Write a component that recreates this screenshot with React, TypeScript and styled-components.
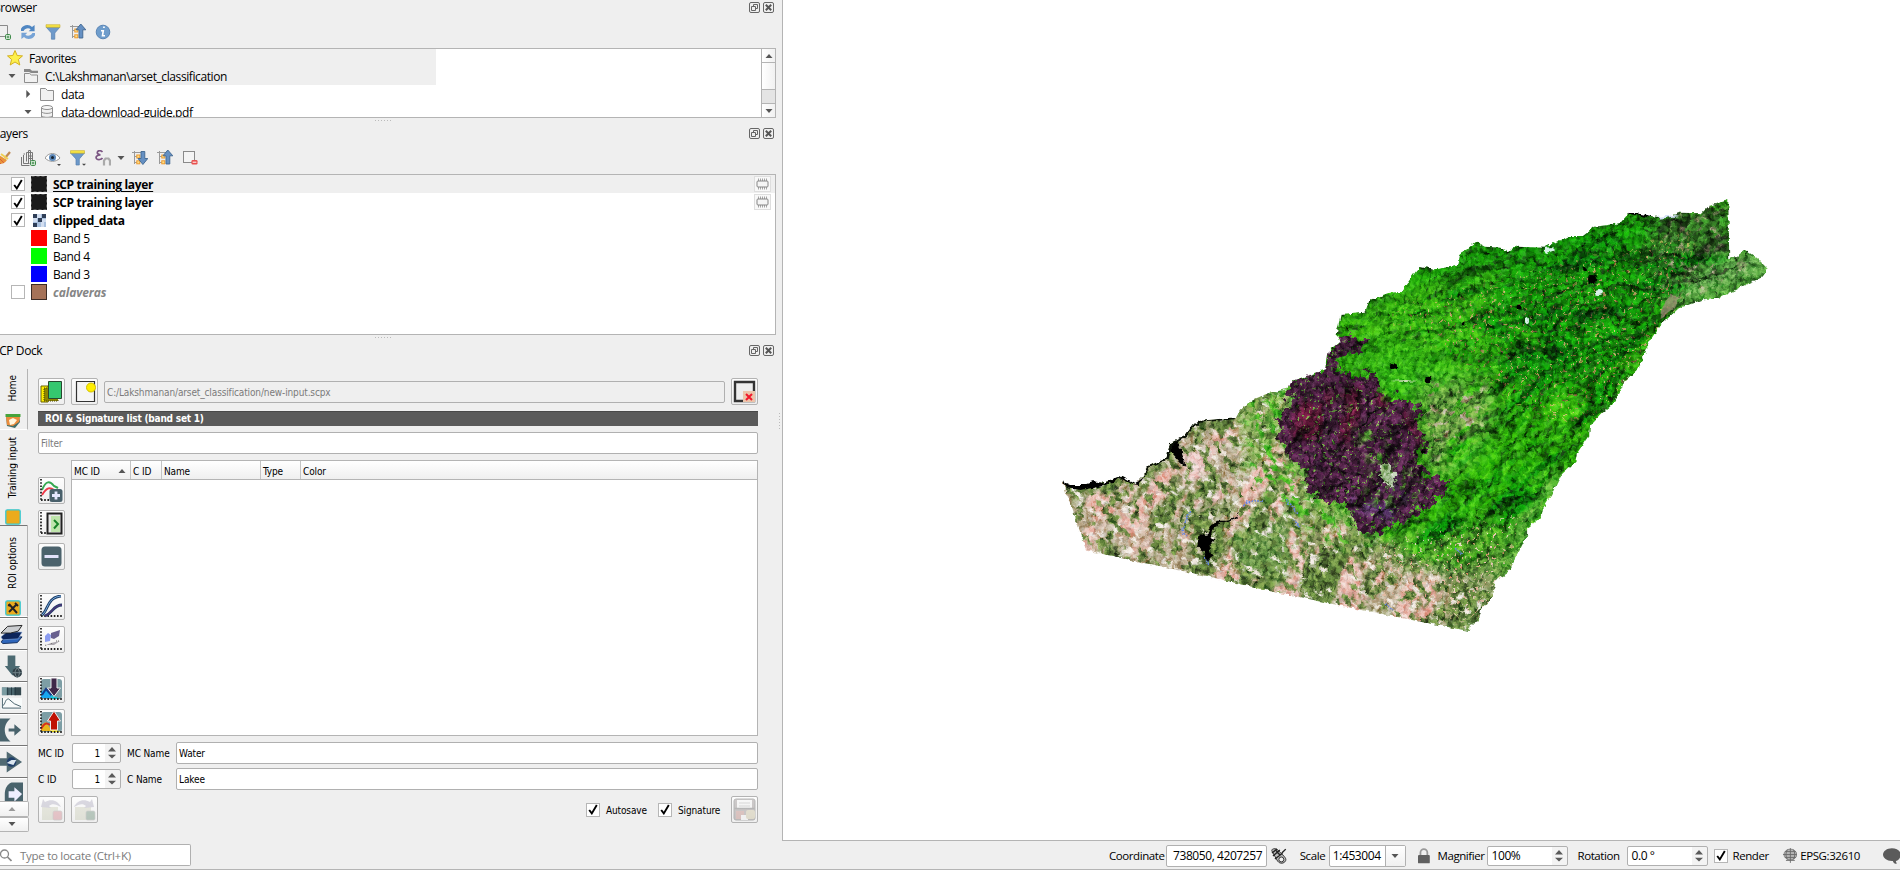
import React from 'react';
import styled, { createGlobalStyle, css } from 'styled-components';

const Global = createGlobalStyle`
  * { box-sizing: border-box; }
  body { margin: 0; background: #efefef; overflow: hidden; }
`;

const UI = `"Open Sans", "Noto Sans", sans-serif`;
const DOCK = `"DejaVu Sans", sans-serif`;

const Window = styled.div`
  display: grid;
  grid-template-columns: 782px 1fr;
  width: 1900px;
  height: 870px;
  overflow: hidden;
  background: #efefef;
  border-bottom: 1px solid #b4b4b4;
  font: 12px/18px ${UI};
  letter-spacing: -0.41px;
  color: #000;
  white-space: nowrap;
`;

const Side = styled.aside`
  display: flex;
  flex-direction: column;
  width: 782px;
  height: 869px;
  overflow: hidden;
`;
const Main = styled.main`
  display: flex;
  flex-direction: column;
  min-width: 0;
`;

/* dock panels */
const Panel = styled.section<{ $h: number }>`
  display: flex;
  flex-direction: column;
  flex: none;
  height: ${p => p.$h}px;
  width: 776px;
`;
const TitleBar = styled.header<{ $h: number; $pull: number }>`
  display: flex;
  align-items: center;
  justify-content: space-between;
  flex: none;
  width: 776px;
  height: ${p => p.$h}px;
  padding-right: 2px;
  span { margin-left: -${p => p.$pull}px; }
`;
const TitleButtons = styled.div`
  display: flex;
  gap: 3px;
`;
const Tools = styled.div`
  display: flex;
  align-items: center;
  gap: 9px;
  height: 33px;
  margin-left: -5px;
  svg { flex: none; }
`;
const MenuArrow = styled.span`
  display: flex;
  margin: 0 -2px 0 -3px;
`;
const Tree = styled.div<{ $h: number }>`
  display: flex;
  height: ${p => p.$h}px;
  border: 1px solid #b4b4b4;
  border-left: 0;
  background: #fff;
  overflow: hidden;
`;
const Rows = styled.div`
  flex: 1;
`;
const Row = styled.div<{ $indent: number; $w?: number; $shade?: boolean }>`
  display: flex;
  align-items: center;
  height: 18px;
  padding-left: ${p => p.$indent}px;
  width: ${p => (p.$w ? p.$w + 'px' : 'auto')};
  background: ${p => (p.$shade ? '#efefef' : 'transparent')};
  svg { flex: none; }
`;
const Gap = styled.i<{ $w: number }>`
  flex: none;
  width: ${p => p.$w}px;
`;
const VGap = styled.i<{ $h: number }>`
  display: block;
  flex: none;
  height: ${p => p.$h}px;
`;
const Grip = styled.div<{ $h: number }>`
  flex: none;
  display: flex;
  gap: 2px;
  height: ${p => p.$h}px;
  padding: 2px 0 0 375px;
  &::before {
    content: '';
    width: 17px;
    height: 1px;
    background: repeating-linear-gradient(90deg, #bbb 0 1px, transparent 1px 3px);
  }
`;
const Scroll = styled.div`
  display: flex;
  flex-direction: column;
  width: 14px;
  border-left: 1px solid #b4b4b4;
  background: #e4e4e4;
`;
const ScrollPart = styled.div<{ $h: number }>`
  display: flex;
  align-items: center;
  justify-content: center;
  height: ${p => p.$h}px;
  background: linear-gradient(90deg, #fff, #f1f1f1);
  border-bottom: 1px solid #b4b4b4;
  & + & + & { margin-top: auto; border-top: 1px solid #b4b4b4; border-bottom: 0; }
`;
const Check = styled.span`
  display: inline-flex;
  flex: none;
  align-items: center;
  justify-content: center;
  width: 14px;
  height: 14px;
  border: 1px solid #b6b6b6;
  background: #fff;
`;
const Name = styled.span<{ $kind?: 'active' | 'bold' | 'off' }>`
  padding-top: 2px;
  line-height: 18px;
  ${p => p.$kind && css`font-weight: 700; letter-spacing: -0.33px;`}
  ${p => p.$kind === 'active' && css`text-decoration: underline; text-underline-offset: 2px; text-decoration-thickness: 1px;`}
  ${p => p.$kind === 'off' && css`font-style: italic; letter-spacing: -0.1px; color: #858585;`}
`;
const Swatch = styled.span<{ $c: string; $edge?: string }>`
  flex: none;
  width: 16px;
  height: 16px;
  background: ${p => p.$c};
  border: ${p => (p.$edge ? '1px solid ' + p.$edge : '0')};
`;
const MemTag = styled.span`
  display: flex;
  align-items: center;
  justify-content: center;
  width: 17px;
  height: 16px;
  margin: 0 4px 0 auto;
  border: 1px solid #dedede;
  background: #f8f8f8;
`;

/* classification dock */
const Dock = styled.div`
  display: flex;
  height: 464px;
  font: 10px/14px ${DOCK};
  font-stretch: condensed;
  letter-spacing: -0.13px;
`;
const Tabs = styled.nav`
  display: flex;
  flex-direction: column;
  width: 29px;
  flex: none;
`;
const Tab = styled.div<{ $h: number; $on?: boolean }>`
  display: flex;
  flex-direction: column;
  align-items: center;
  justify-content: flex-end;
  gap: 11px;
  flex: none;
  width: 28px;
  height: ${p => p.$h}px;
  padding-right: 2px;
  border-right: 1px solid ${p => (p.$on ? 'transparent' : '#b4b4b4')};
  border-bottom: 1px solid ${p => (p.$on ? '#767676' : '#fff')};
  span { writing-mode: vertical-rl; transform: rotate(180deg); line-height: 14px; letter-spacing: 0; }
`;
const IconTab = styled.div<{ $h?: number }>`
  display: flex;
  align-items: flex-start;
  justify-content: center;
  flex: none;
  width: 28px;
  height: ${p => p.$h ?? 32}px;
  padding: 4px 4px 0 0;
  overflow: hidden;
  border-right: 1px solid #b4b4b4;
  border-top: 1px solid #767676;
  box-shadow: inset 0 1px #fff;
`;
const TabArrow = styled.div`
  display: flex;
  align-items: center;
  justify-content: center;
  flex: none;
  width: 29px;
  height: 15.5px;
  padding-right: 4px;
  border: 1px solid #b4b4b4;
  border-left: 0;
  border-radius: 0 2px 2px 0;
  background: linear-gradient(#fff, #f0f0f0);
`;
const Body = styled.div`
  display: flex;
  flex-direction: column;
  width: 720px;
  margin-left: 9px;
  padding-top: 9px;
`;
const FileRow = styled.div<{ $h: number }>`
  display: flex;
  align-items: center;
  height: ${p => p.$h}px;
  gap: 6px;
`;
const Btn = styled.button<{ $faded?: boolean }>`
  display: flex;
  align-items: center;
  justify-content: center;
  flex: none;
  width: 27px;
  height: 27px;
  padding: 0;
  border: 1px solid #b3b3b3;
  border-radius: 2px;
  background: linear-gradient(#fdfdfd, #efefef);
  svg { opacity: ${p => (p.$faded ? 0.3 : 1)}; }
`;
const Field = styled.div<{ $w?: number; $pad?: number; $read?: boolean; $hint?: boolean }>`
  display: flex;
  align-items: center;
  flex: ${p => (p.$w ? 'none' : '1')};
  width: ${p => (p.$w ? p.$w + 'px' : 'auto')};
  height: 22px;
  padding-left: ${p => p.$pad ?? 2}px;
  padding-top: ${p => (p.$w ? 0 : 2)}px;
  border: 1px solid #b0b0b0;
  border-radius: 2px;
  background: ${p => (p.$read ? '#efefef' : '#fff')};
  color: ${p => (p.$read || p.$hint ? '#7b7b7b' : '#000')};
`;
const Banner = styled.div`
  flex: none;
  height: 15px;
  margin: 6px 0;
  padding-left: 7px;
  background: #5a5a5a;
  border-top: 1px solid #484848;
  color: #fff;
  font-weight: 700;
  letter-spacing: -0.21px;
`;
const ListRow = styled.div`
  display: flex;
  gap: 6px;
  height: 276px;
  margin-top: 6px;
`;
const BtnColumn = styled.div`
  display: flex;
  flex-direction: column;
  gap: 6px;
  padding-top: 17px;
`;
const Table = styled.div`
  flex: 1;
  border: 1px solid #b4b4b4;
  background: #fff;
`;
const Head = styled.div`
  display: grid;
  grid-template-columns: 59px 31px 99px 40px 1fr;
  height: 19px;
  border-bottom: 1px solid #b4b4b4;
  background: linear-gradient(#fff, #efefef);
`;
const HeadCell = styled.div`
  display: flex;
  align-items: center;
  justify-content: space-between;
  padding: 4px 4px 0 2px;
  border-right: 1px solid #c4c4c4;
  svg { margin-top: -3px; }
  &:last-child { border: 0; }
`;
const FormRow = styled.div<{ $mt: number }>`
  display: flex;
  align-items: center;
  height: 22px;
  margin-top: ${p => p.$mt}px;
`;
const FormLabel = styled.label<{ $w: number }>`
  flex: none;
  width: ${p => p.$w}px;
  padding-top: 2px;
`;
const Spin = styled.div<{ $w: number; $right?: boolean }>`
  display: flex;
  align-items: center;
  flex: none;
  width: ${p => p.$w}px;
  height: 20px;
  padding-left: 4px;
  border: 1px solid #b0b0b0;
  border-radius: 2px;
  background: linear-gradient(90deg, #fff calc(100% - 15px), #f3f3f3 calc(100% - 15px));
  span { flex: 1; text-align: ${p => (p.$right ? 'right' : 'left')}; padding: ${p => (p.$right ? '2px 5px 0 0' : 0)}; }
  svg { margin: 0 4px 0 3px; }
`;
const Actions = styled.div`
  display: flex;
  align-items: center;
  gap: 6px;
  height: 27px;
  margin-top: 6px;
`;
const Push = styled.i`
  margin-left: auto;
`;
const LocatorBox = styled.div`
  display: flex;
  align-items: center;
  gap: 8px;
  width: 191px;
  height: 22px;
  margin-top: 11px;
  padding-top: 1px;
  border: 1px solid #b0b0b0;
  border-left: 0;
  border-radius: 0 2px 2px 0;
  background: #fff;
  color: #7b7b7b;
  letter-spacing: -0.28px;
  font-size: 11.5px;
`;

/* map and status bar */
const MapCanvas = styled.div`
  height: 841px;
  border-left: 1px solid #b4b4b4;
  border-bottom: 1px solid #b4b4b4;
  background: #fff;
  overflow: hidden;
  svg { display: block; }
`;
const SideGrip = styled.i`
  position: absolute;
  left: 779px;
  top: 413px;
  width: 1px;
  height: 17px;
  background: repeating-linear-gradient(#bbb 0 1px, transparent 1px 3px);
`;
const Status = styled.footer`
  display: flex;
  align-items: center;
  height: 28px;
  padding: 1px 0 0 327px;
  letter-spacing: -0.42px;
`;
const StatusText = styled.span<{ $w: number }>`
  flex: none;
  width: ${p => p.$w}px;
  font-size: 11.5px;
`;
const Combo = styled.div`
  display: flex;
  align-items: center;
  flex: none;
  width: 77px;
  height: 22px;
  padding-left: 3px;
  border: 1px solid #b0b0b0;
  border-radius: 2px;
  background: #fff;
  letter-spacing: -0.4px;
`;
const ComboArrow = styled.span`
  display: flex;
  align-items: center;
  justify-content: center;
  width: 20px;
  height: 20px;
  margin-left: auto;
  border-left: 1px solid #b0b0b0;
  background: linear-gradient(#fff, #f0f0f0);
`;

const Tri = ({ d = 'down', c = '#555', w = 8 }: { d?: 'down' | 'up' | 'right'; c?: string; w?: number }) => (
  <svg width={w} height={w} viewBox="0 0 8 8">
    <path fill={c} d={d === 'down' ? 'M.5 2h7L4 6z' : d === 'up' ? 'M.5 6h7L4 2z' : 'M2.300 0v8L6.200 4z'} />
  </svg>
);
const SpinArrows = () => (
  <svg width="8" height="14" viewBox="0 0 8 14"><path d="M0 5.400h8L4 1zM0 8.800h8L4 12.600z" fill="#5a5a5a" /></svg>
);
const Tick = () => (
  <svg width="10" height="11" viewBox="0 0 10 11"><path d="M1.200 6 3.800 9.400 8.800 1" fill="none" stroke="#000" strokeWidth="1.900" /></svg>
);
const FloatIcon = () => (
  <svg width="11" height="11" viewBox="0 0 11 11" fill="none" stroke="#666">
    <rect x=".5" y=".5" width="10" height="10" rx="1.500" />
    <path d="M2.500 4.500h4v4h-4zM4.500 4.500v-2h4v4h-2" />
  </svg>
);
const CloseIcon = () => (
  <svg width="11" height="11" viewBox="0 0 11 11" fill="none" stroke="#666">
    <rect x=".5" y=".5" width="10" height="10" rx="1.500" />
    <path d="m2.800 2.800 5.400 5.400m0-5.400L2.800 8.200" strokeWidth="2" stroke="#555" />
  </svg>
);
const TitleIcons = () => <TitleButtons><FloatIcon /><CloseIcon /></TitleButtons>;

const Svg16 = ({ children, s = 16 }: { children: React.ReactNode; s?: number }) => (
  <svg width={s} height={s} viewBox="0 0 16 16">{children}</svg>
);
const Plus = () => <g><rect x="10.500" y="10.500" width="5" height="5" rx="1.300" fill="#e4f3e4" stroke="#3f8a4a" /><path d="M13 11.600v2.800M11.600 13h2.800" stroke="#3f8a4a" /></g>;
const AddLayerIcon = () => <Svg16><path d="M1 1.500h11.500v10M1 12.500h9" fill="none" stroke="#8a8a8a" /><Plus /></Svg16>;
const RefreshIcon = () => (
  <Svg16>
    <path d="M1 7V4.800C3.500.2 9.500 0 12 3l2.600-2v6.200H8.700l2-2C8.800 3.600 5 4 3.600 7z" fill="#4f86c2" />
    <path d="M15 9v2.200C12.500 15.800 6.500 16 4 13l-2.600 2V8.800h5.900l-2 2c1.900 1.600 5.700 1.200 7.100-1.800z" fill="#76a3d6" />
  </Svg16>
);
const FilterIcon = () => (
  <Svg16><path d="M1 3h14L9.800 9v6.200H6.400V9z" fill="#6d99ca" stroke="#5580b0" strokeWidth=".7" /><path d="M1 .7h14v2.600H1z" fill="#f6e444" stroke="#c8ac30" strokeWidth=".6" /></Svg16>
);
const TreeArrowIcon = ({ up }: { up?: boolean }) => (
  <Svg16>
    <path d="M2.500 1v13M0 2.500h9M2.500 6.500h4M2.500 12.500h4" stroke="#999" fill="none" />
    <rect x="4.800" y="5" width="3" height="3" fill="#fbe08a" stroke="#ee9a2e" /><rect x="4.800" y="10.800" width="3" height="3" fill="#fbe08a" stroke="#ee9a2e" />
    <path d={up ? 'M10.800 0 15.800 5.800h-3V14H9V5.800H6z' : 'M9 1.500h3.800v7h3L10.900 14.500 6 8.500h3z'} fill="#6590c3" stroke="#3f6690" strokeWidth=".9" />
  </Svg16>
);
const InfoIcon = () => (
  <Svg16><circle cx="8" cy="8" r="6.800" fill="#6f9dcc" stroke="#5b86b6" /><path d="M8.900 3.200h.1M6.800 6.700h1.500l-.8 5h1.700" stroke="#fff" strokeWidth="1.600" fill="none" strokeLinecap="square" /></Svg16>
);
const BrushIcon = () => (
  <Svg16><path d="m15 2-5 6" stroke="#c08a55" strokeWidth="2.200" /><path d="m4 5 8 5c-2 3-5 4-7 4L0 9z" fill="#e9953a" /><path d="m1 9 5 5M3 7l6 6" stroke="#d9603a" /><path d="m6 4 7 5" stroke="#f0d050" strokeWidth="2" /></Svg16>
);
const GroupIcon = () => (
  <Svg16><path d="M6.500 11.500v-9h6v8M9 6h4M9 8.500h3M8.500 13V.5h2V11M3.500 5v8.500h6M5 4H3.500M1.500 7v8.500h8" stroke="#777" fill="none" /><Plus /></Svg16>
);
const EyeIcon = () => (
  <Svg16><path d="M0 8c3.500-6 11-6 15 0-4 4.500-11 4.500-15 0z" fill="#fff" stroke="#999" /><circle cx="7.500" cy="7.500" r="3.500" fill="#5b87b8" /><circle cx="7.500" cy="7.500" r="1.500" fill="#17232f" /><path d="M12 14h4l-2 2z" fill="#444" /></Svg16>
);
const FilterMenuIcon = () => (
  <Svg16><path d="M.5 3h14L9.300 9v6H6V9z" fill="#6d99ca" stroke="#5580b0" strokeWidth=".7" /><path d="M.5.600h14v2.600H.5z" fill="#f6e444" stroke="#c8ac30" strokeWidth=".6" /><path d="M12 13.800h4l-2 2z" fill="#444" /></Svg16>
);
const ExprIcon = () => (
  <Svg16><path d="M7.500 2C5-.5 1.500 1 2.500 3.500 3 4.500 4 4.800 5.500 4.800 2.500 5-.200 7 1.700 8.800c1.500 1.200 4.500 1 5.800-.800" stroke="#7b5583" strokeWidth="1.700" fill="none" /><path d="M9 15.500V10.500l1.500-2h3l1.500 2v5" stroke="#aaa" strokeWidth="2.200" fill="none" /></Svg16>
);
const RemoveLayerIcon = () => (
  <Svg16><rect x="1.500" y="1.500" width="11" height="11" fill="#f4f4f4" stroke="#8a8a8a" /><rect x="9.500" y="10" width="6" height="4.500" rx="1.200" fill="#e9504e" /><path d="M10.600 12.200h3.800" stroke="#fff" /></Svg16>
);
const StarIcon = () => <Svg16><path d="m8 .5 2.200 5 5.300.400-4.100 3.600 1.400 5.500L8 12l-4.800 3 1.400-5.500L.5 5.900l5.300-.400z" fill="#fdf04c" stroke="#d4b01e" /></Svg16>;
const FolderIcon = ({ open }: { open?: boolean }) => (
  <Svg16>
    {open && <path d="M1 1h6l2 1.800h6V5H8L6 4H1z" fill="#888" />}
    <path d={open ? 'M1.500 5.500h5l2 1.500h6v7.500h-13z' : 'M1.500 2.500h5l2 2h6v10h-13z'} fill="#f1f1f1" stroke="#8e8e8e" />
  </Svg16>
);
const DbIcon = () => (
  <Svg16><path d="M2.500 3.500v11h11v-11" fill="#f1f1f1" stroke="#8e8e8e" /><ellipse cx="8" cy="3.500" rx="5.500" ry="2" fill="#f6f6f6" stroke="#8e8e8e" /><path d="M2.500 7.500c1 2.500 10 2.500 11 0M2.500 11.500c1 2.500 10 2.500 11 0" stroke="#8e8e8e" fill="none" /></Svg16>
);
const RasterIcon = () => (
  <svg width="13" height="13" viewBox="0 0 13 13" shapeRendering="crispEdges">
    <path fill="#a9c0de" d="M0 0h13v13H0z" /><path fill="#d2def0" d="M4 0h4v4H4zM0 4h4v4H0zM8 5h5v3H8zM8 8h3v5H8z" />
    <path fill="#2f3e57" d="M0 0h4v4H0zM9 0h4v4H9zM5 4h4v4H5zM0 9h4v4H0z" />
  </svg>
);
const PatternSwatch = () => (
  <svg width="16" height="16"><path d="M0 0h16v16H0z" fill="#1a1a1a" /><rect x=".5" y=".5" width="15" height="15" fill="none" stroke="#555" strokeDasharray="3 2" /></svg>
);
const ChipIcon = () => (
  <svg width="13" height="12" viewBox="0 0 13 12"><path d="M2.500 .5v11M4.500 .5v11M6.500 .5v11M8.500 .5v11M10.500 .5v11" stroke="#a5a5a5" /><rect x="1" y="3" width="11" height="6" rx="1" fill="#f5f5f5" stroke="#858585" /></svg>
);

const Axes = () => <path d="M1 0v22M1 21h21" stroke="#222" strokeWidth="1.800" strokeDasharray="1.600 1.600" fill="none" />;
const B = ({ children }: { children: React.ReactNode }) => <svg width="23" height="23" viewBox="0 0 23 23">{children}</svg>;

const OpenProjectIcon = () => <B><path d="M1 6h7v16H1z" fill="#ffee00" stroke="#6a6400" /><path d="M4 8h14v13H4z" fill="#8d8300" stroke="#4d4800" strokeDasharray="1 1" /><path d="M8.500 1.500h13v17h-13z" fill="#35c76f" stroke="#27472f" /></B>;
const NewProjectIcon = () => <B><path d="M3.500 1.500h18v20h-18z" fill="#f5f5f5" stroke="#333" strokeWidth="1.200" /><circle cx="18" cy="7.500" r="4.500" fill="#ffee00" stroke="#d2c000" /></B>;
const ResetIcon = () => <B><path d="M2 2h19v19H2z" fill="#eee" stroke="#333" strokeWidth="2.400" /><path d="M10 11h12v11H10z" fill="#ecc4aa" /><path d="m13 14 6 6m0-6-6 6" stroke="#f0182c" strokeWidth="2" /></B>;
const AddSignatureIcon = () => <B><path d="M2 11c4-10 8-9 12-4l4 2" stroke="#35a850" strokeWidth="2" fill="none" /><path d="M2 16c5-8 8-8 12-5" stroke="#ee3948" strokeWidth="2" fill="none" /><Axes /><rect x="9.500" y="10" width="13" height="13" rx="2.500" fill="#49606b" /><path d="M16 12.500v8M12 16.500h8" stroke="#e5e8ff" strokeWidth="2.800" /></B>;
const ImportIcon = () => <B><Axes /><path d="M7.500 1.500h14v20h-14z" fill="#e9e9e9" stroke="#222" strokeWidth="2" /><path d="M11 4h9v16h-9z" fill="#bfe5ac" /><path d="m14 8 4 4-4 4.500" stroke="#198228" strokeWidth="2" fill="none" /></B>;
const MinusIcon = () => <B><rect x="1.500" y="1.500" width="20" height="20" rx="3.500" fill="#4b626c" /><path d="M4.500 11.500h14" stroke="#e2e2fa" strokeWidth="3" /></B>;
const PlotIcon = () => <B><Axes /><path d="M2 20C8 16 7 2 21 1M5 21C13 18 13 10 22 10" stroke="#1e3f68" strokeWidth="2.800" fill="none" /><path d="M2 20C8 16 7 2 21 1" stroke="#76a9dd" fill="none" /><path d="M5 21C13 18 13 10 22 10" stroke="#4b3577" strokeWidth="1.400" fill="none" /></B>;
const ScatterIcon = () => <B><Axes /><path d="M5 8 8 5l3 2-1 6-5 1z" fill="#8b9cf0" /><path d="m11 5 9-3-1 6-5 3-3-1z" fill="#68608f" /><path d="m6 17 5-2 9-2-6 4z" fill="#aaa6ad" /><path d="m5 17 2 1m4-3 1 1m4-3 3 0" stroke="#666" strokeDasharray="1 1" /></B>;
const LoadIcon = ({ up }: { up?: boolean }) => (
  <B>
    <rect x="1" y="1" width="21" height="20" rx="3" fill="#7d9ea5" />
    <path d="M1 20v-6l5-3 6 9z" fill={up ? '#e9b51b' : '#17a8f1'} /><path d={up ? 'M1 18c4-7 6-6 9-4' : 'M2 17 6 11l8 9'} stroke={up ? '#d33020' : '#163c89'} strokeWidth="2" fill="none" />
    <path d="M11 17 21 21h-10z" fill={up ? '#ffe600' : '#19c4d6'} /><Axes />
    <path d={up ? 'M14 0 20.500 10h-3v9h-7v-9h-3z' : 'M11 0h6v10h3.500L14 18.500 7.500 10H11z'} fill={up ? '#c01204' : '#3f2748'} stroke="#eee" strokeWidth="1" />
  </B>
);
const UndoIcon = ({ flip }: { flip?: boolean }) => (
  <B>
    <path d="M2 9h16v13H2z" fill="#b9bd9e" /><g transform={flip ? 'translate(22 0) scale(-1 1)' : undefined}><path d="m1 9 2-8 2 3c7-4 13-1 16 5-5-3-9-4-12-1l2 2z" fill="#8e8aa5" /></g>
    <rect x="13" y="13" width="9" height="9" rx="1.500" fill={flip ? '#2f6040' : '#c05560'} stroke="#777" strokeWidth=".7" />
  </B>
);
const SaveIcon = () => <B><rect x="1" y="1" width="21" height="21" rx="2" fill="#655a5a" stroke="#222" /><path d="M4 2h15v8H4z" fill="#eee" /><path d="M6 5h11M6 8h11" stroke="#888" /><path d="M1.500 10.500h20" stroke="#222" strokeWidth="1.500" /><path d="M3 13h8v8H3z" fill="#a05348" /><path d="M8 17h7v5H8z" fill="#eee" /><rect x="13" y="12" width="9" height="9" rx="2" fill="#b5a877" /></B>;

const HomeTabIcon = () => <Svg16><path d="M1 3h13l1 6-5 6-8-2z" fill="#3f6f6b" /><path d="M.5 1h15v3H.5z" fill="#46a33c" /><path d="M1 4h14l-1 5-6 4-6-1z" fill="#ea8c3c" /><path d="m4 7 4-2 4 2-3 4-4 1z" fill="#fff6df" /></Svg16>;
const RoiTabIcon = ({ tools }: { tools?: boolean }) => (
  <Svg16><rect x=".8" y=".8" width="14.400" height="14.400" rx="1.500" fill="#ebab1c" stroke="#35c9d6" strokeWidth="1.300" />{tools && <path d="m4 4 8 9M4 12l7-7M3 5l3 1M10 3l3 3" stroke="#222" strokeWidth="1.900" />}</Svg16>
);
const T = ({ children }: { children: React.ReactNode }) => <svg width="24" height="25" viewBox="0 0 24 25">{children}</svg>;
const BandsIcon = () => <T><path d="m1 20 6-5h16l-5 6-15 1z" fill="#2f66ba" stroke="#17305c" /><path d="m1 15 6-5h16l-4 7-16 1z" fill="#0d255b" stroke="#8fb0e0" strokeWidth=".6" /><path d="M1 11 8 4l15-1-4 6-8 2z" fill="#cbcdd0" stroke="#222" /></T>;
const DownIcon = () => <T><path d="M8 1h8v11h5l-8 10-8-10h3z" fill="#4c6a72" /><circle cx="18" cy="19" r="5" fill="#303f46" /><path d="M13 19h10M18 14c-3 3-3 7 0 10 3-3 3-7 0-10" stroke="#76888d" fill="none" /></T>;
const PreIcon = () => <T><path d="M2 1h20v8H2z" fill="#4a666e" /><path d="M2 1h5v8H2z" fill="#7b9ca2" /><path d="M15 1h7v8h-7z" fill="#34484f" /><path d="M8 1v8M12 1v8M16 1v8" stroke="#263b43" /><path d="M1 12h22v12H1z" fill="#f8fbfb" /><path d="M2.500 12v10.500H22M3 20c3-2 2-7 6-7l6 5 7 3" stroke="#445e68" fill="none" /></T>;
const BandProcIcon = () => <T><path d="M0 0h12C7 4 6 9 6 12s1 8 6 12H0z" fill="#49636c" transform="translate(-1 0)" /><path d="M9 10.500h6V6l7 6-7 6v-4.500H9z" fill="#49636c" /></T>;
const PostIcon = () => <T><path d="M0 8h7V1l16 11L7 23v-7H0z" fill="#506972" /><circle cx="12" cy="12" r="5" fill="#203f6a" /><path d="m7 13 5-3h5l-3 5z" fill="#dbe6ef" /></T>;
const CalcIcon = () => <T><path d="M24 0H12C7 2 5 7 5 12v12h19z" fill="#49636c" /><path d="M9 9h6V5l8 7-8 8v-4H9z" fill="#eef" /></T>;

const OUTLINE = 'M1420 60 1422 235 1438 228 1455 210 1480 235 1502 268 1490 292 1450 318 1405 352 1370 358 1318 385 1280 435 1255 490 1235 565 1205 605 1185 665 1158 700 1135 735 1133 765 1108 820 1105 845 1075 885 1055 945 1038 985 1035 1010 1005 1045 1005 1065 990 1110 975 1150 965 1180 940 1200 935 1250 910 1290 905 1325 887 1335 885 1353 730 1310 480 1235 350 1190 98 1112 85 1065 60 960 45 903 62 915 85 915 110 903 130 908 165 888 195 912 215 885 220 860 260 835 268 790 300 765 315 735 330 722 405 712 412 690 430 665 470 640 508 628 525 600 590 568 595 515 620 485 612 460 620 405 670 398 680 360 720 338 745 335 775 275 785 258 815 268 860 258 865 225 900 185 920 200 950 203 965 213 985 200 1040 203 1090 168 1120 168 1145 140 1195 130 1215 95 1270 110 1300 108 1320 98 1365 100 1380 78Z';
const LOWLAND = 'M0 850 210 840 270 740 420 640 520 640 480 760 540 880 560 940 640 1010 680 1080 760 1120 830 1180 940 1220 900 1380 0 1150Z';
const BURN = 'M615 480 680 472 665 500 645 515 625 520 612 570 640 585 690 582 702 640 712 672 735 655 775 672 780 740 795 770 792 810 778 840 795 885 842 905 820 960 775 1005 730 1035 700 1055 665 1062 650 1035 640 990 590 960 545 920 550 870 520 830 495 790 498 700 520 655 505 625 525 600 590 570 592 530Z';

const Speckle = ({ id, f, seed, k, off, blur = 4 }: { id: string; f: string; seed: number; k: number; off: number; blur?: number }) => (
  <filter id={id} filterUnits="userSpaceOnUse" x="-900" y="-900" width="2600" height="2400" colorInterpolationFilters="sRGB">
    <feTurbulence type="fractalNoise" baseFrequency={f} numOctaves={5} seed={seed} />
    <feColorMatrix values={`0 0 0 0 0  0 0 0 0 0  0 0 0 0 0  ${k} 0 0 0 ${off}`} result="n" />
    <feGaussianBlur in="SourceGraphic" stdDeviation={blur} result="b" />
    <feComposite in="b" in2="n" operator="in" />
  </filter>
);
const Shape = ({ d, fill }: { d: string; fill: string }) => <path d={d} fill={fill} transform="scale(.4847 .3333)" />;
const Patch = ({ d, fill, filter, angle = 0 }: { d: string; fill: string; filter: string; angle?: number }) => (
  <g transform={`rotate(${angle})`}><g filter={`url(#${filter})`}><g transform={`rotate(${-angle})`}><Shape d={d} fill={fill} /></g></g></g>
);
const Relief = ({ filter, angle, mask, mode, opacity }: { filter: string; angle: number; mask?: string; mode: 'overlay' | 'hard-light'; opacity: number }) => (
  <g style={{ mixBlendMode: mode, opacity }} mask={mask && `url(#${mask})`}>
    <g transform={`rotate(${angle})`}><rect x="-500" y="-200" width="1500" height="1200" filter={`url(#${filter})`} /></g>
  </g>
);

const Satellite = () => (
  <svg width="1117" height="840">
    <defs>
      <clipPath id="county"><path d={OUTLINE} transform="scale(.4847 .3333)" /></clipPath>
      <filter id="ragged" filterUnits="userSpaceOnUse" x="0" y="0" width="760" height="470" colorInterpolationFilters="sRGB">
        <feTurbulence type="fractalNoise" baseFrequency=".2" numOctaves={2} seed={4} />
        <feDisplacementMap in="SourceGraphic" scale="5" xChannelSelector="R" yChannelSelector="G" />
      </filter>
      <filter id="soft" filterUnits="userSpaceOnUse" x="-50" y="-50" width="860" height="570" colorInterpolationFilters="sRGB"><feGaussianBlur stdDeviation="9" /></filter>
      <filter id="burnEdge" filterUnits="userSpaceOnUse" x="0" y="0" width="760" height="470" colorInterpolationFilters="sRGB">
        <feTurbulence type="fractalNoise" baseFrequency=".13" numOctaves={4} seed={9} />
        <feDisplacementMap in="SourceGraphic" scale="22" xChannelSelector="R" yChannelSelector="G" />
      </filter>
      <mask id="upperMask" maskUnits="userSpaceOnUse" x="0" y="0" width="760" height="470">
        <g filter="url(#soft)"><Shape d="M600 300 1568 0 1568 420 1200 560 850 620 500 500Z" fill="#fff" /></g>
      </mask>
      <mask id="lowerMask" maskUnits="userSpaceOnUse" x="0" y="0" width="760" height="470">
        <g filter="url(#soft)"><Shape d="M400 560 850 620 1200 560 1568 420 1568 1400 400 1400Z" fill="#fff" /><Shape d={LOWLAND} fill="#555" /></g>
      </mask>
      <Speckle id="mottle" f=".035 .016" seed={3} k={9} off={-4.400} />
      <Speckle id="mottle2" f=".03 .014" seed={17} k={9} off={-4.300} />
      <Speckle id="fine" f=".09 .14" seed={8} k={8} off={-4.700} blur={7} />
      <Speckle id="fine2" f=".08 .12" seed={28} k={9} off={-4.900} blur={7} />
      <Speckle id="dots" f=".3" seed={41} k={14} off={-9.200} blur={7} />
      <Speckle id="streak" f=".014 .07" seed={12} k={6} off={-2.900} blur={8} />
      <Speckle id="streak2" f=".016 .06" seed={31} k={6} off={-3.100} blur={8} />
      {([['relief', '.022 .055', 5, 7, 250, 45], ['relief2', '.022 .06', 15, 6.5, 240, 50], ['reliefFine', '.13 .24', 21, 3.600, 200, 20]] as const).map(([id, f, seed, s, az, warp]) => (
        <filter key={id} id={id} filterUnits="userSpaceOnUse" x="-500" y="-200" width="1500" height="1200" colorInterpolationFilters="sRGB">
          <feTurbulence type="fractalNoise" baseFrequency={f} numOctaves={6} seed={seed} />
          <feDiffuseLighting surfaceScale={s} diffuseConstant=".75" lightingColor="#fff" result="lit"><feDistantLight azimuth={az} elevation="45" /></feDiffuseLighting>
          <feTurbulence type="fractalNoise" baseFrequency=".018" numOctaves={3} seed={seed + 1} result="warp" />
          <feDisplacementMap in="lit" in2="warp" scale={warp} xChannelSelector="R" yChannelSelector="G" />
        </filter>
      ))}
    </defs>
    <g transform="translate(257 180)">
      <g filter="url(#ragged)">
        <g clipPath="url(#county)">
          <rect width="760" height="470" fill="#259a06" />
          <g filter="url(#soft)">
            <Shape d="M600 380 900 180 1420 50 1440 240 1290 380 1150 600 1030 640 950 560 880 420Z" fill="#118a06" />
            <Shape d="M600 400 800 300 960 260 900 420 960 540 900 600 700 500Z" fill="#32a60e" />
            <Shape d="M620 520 760 500 900 600 900 680 780 680 700 640Z" fill="#35b812" />
            <Shape d="M780 620 920 600 950 700 880 850 810 900 790 740Z" fill="#62983c" />
            <Shape d="M1280 90 1430 50 1430 250 1300 340 1240 250Z" fill="#2b671d" />
            <Shape d="M1420 220 1500 190 1520 290 1400 360 1300 400 1290 350Z" fill="#579a43" />
            <Shape d={LOWLAND} fill="#c3b398" />
            <Shape d="M400 640 520 620 490 760 520 880 570 940 650 1000 640 1060 560 1020 430 850Z" fill="#8fc05c" />
            <Shape d="M380 970 480 970 560 1090 600 1200 480 1240 360 1190Z" fill="#6f9c4b" />
            <Shape d="M200 850 290 830 290 970 200 980Z" fill="#86a060" />
            <Shape d="M660 1080 950 1010 960 1160 920 1220 780 1150Z" fill="#4a9a24" />
            <Shape d="M880 1170 970 1130 930 1300 880 1380 790 1340Z" fill="#6f8d4b" />
            <Shape d="M1060 870 1080 890 990 1150 960 1170 980 1040Z" fill="#73b54d" />
          </g>
          <Patch d="M880 480 1300 380 1150 720 1020 1020 860 1100 700 1090 840 900 950 700Z" fill="#087a06" filter="streak" angle={-38} />
          <Patch d="M700 360 1100 200 1400 90 1420 240 1250 450 1000 620 860 500Z" fill="#077008" filter="streak2" angle={-10} />
          <Patch d="M780 600 1160 600 1100 850 980 1120 760 1150 690 1080 850 880Z" fill="#3dc810" filter="streak2" angle={-40} />
          <Patch d="M600 420 900 300 1000 400 1050 600 940 610 700 480Z" fill="#38bc0f" filter="streak" angle={25} />
          <Patch d={LOWLAND} fill="#ecbfb4" filter="mottle2" angle={22} />
          <Patch d={LOWLAND} fill="#64863c" filter="mottle" angle={28} />
          <Patch d="M290 780 400 720 430 800 440 940 400 1040 330 1050 290 930Z" fill="#f0ccc8" filter="mottle2" angle={60} />
          <Patch d={LOWLAND} fill="#f6efe8" filter="fine" angle={30} />
          <Patch d={LOWLAND} fill="#6b8a40" filter="fine2" angle={50} />
          <Patch d="M420 650 520 640 500 800 560 930 650 1020 700 1100 600 1100 430 900Z" fill="#4bc022" filter="fine2" angle={35} />
          <Patch d="M700 400 1350 150 1300 450 1130 760 1000 700 850 520Z" fill="#a28a4e" filter="dots" />
          <Patch d="M690 1100 1000 1000 930 1330 700 1290Z" fill="#e8c0a8" filter="dots" />
          <Patch d="M1290 100 1420 80 1420 230 1480 240 1400 340 1280 340Z" fill="#8a8668" filter="fine" angle={-40} />
          <Patch d="M790 600 930 620 900 760 800 860Z" fill="#b0a088" filter="fine" angle={-30} />
          <g filter="url(#burnEdge)"><Shape d={BURN} fill="#451c3c" /></g>
          <Patch d="M530 640 680 620 760 700 790 790 650 800 520 780Z" fill="#541430" filter="mottle2" />
          <Patch d="M560 840 700 880 780 900 740 1030 650 990Z" fill="#4a2c5c" filter="mottle" />
          <Patch d="M625 650 665 680 720 840 750 900 735 940 695 880 650 740Z" fill="#4c9a28" filter="fine2" angle={50} />
          <Patch d="M700 850 800 880 770 960 690 1000 660 960Z" fill="#4b7f30" filter="fine" angle={-40} />
          <Patch d={BURN} fill="#588b35" filter="dots" />
          <g filter="url(#burnEdge)"><Shape d="M705 845 718 850 734 900 718 922 708 890Z" fill="#b0c8a0" /></g>
          <Relief filter="relief2" angle={-12} mask="upperMask" mode="overlay" opacity={0.8} />
          <Relief filter="relief" angle={-38} mask="lowerMask" mode="overlay" opacity={0.85} />
          <Relief filter="reliefFine" angle={-60} mode="overlay" opacity={0.85} />
          <Relief filter="reliefFine" angle={20} mode="hard-light" opacity={0.2} />
          <Shape d="M45 900 62 912 85 912 105 900 118 900 130 912 165 885 198 910 215 890 203 915 190 912 165 895 130 918 105 925 85 930 55 925Z" fill="#000" />
          <Shape d="M268 790 285 788 296 830 300 860 290 848 272 818Z" fill="#000" />
          <Shape d="M412 990 405 1015 385 1028 370 1030 355 1050 352 1072 362 1078 348 1100 356 1130 345 1145 336 1110 324 1098 330 1060 345 1068 348 1048 365 1022 388 1022 404 1010Z" fill="#000" />
          <Shape d="M45 903 62 915 85 915 110 903 130 908 165 888 195 912 215 885 220 860 260 835 268 790 300 765 315 735 330 722 405 712 400 718 332 728 318 740 302 770 274 795 265 838 226 862 218 890Z" fill="#0b1208" />
          <g fill="#000"><circle cx="353" cy="186" r="3" /><circle cx="388" cy="200" r="3.200" /><circle cx="479" cy="127" r="2.500" /><ellipse cx="552" cy="99" rx="4" ry="5" /><circle cx="545" cy="89" r="2" /><circle cx="424" cy="143" r="1.500" /><circle cx="383" cy="271" r="1.500" /></g>
          <Shape d="M1208 92 1230 94 1270 108 1255 112 1215 101Z" fill="#000" />
          <Shape d="M1270 106 1305 104 1318 108 1280 116Z" fill="#cfdcf5" />
          <g fill="#d8f2ea"><ellipse cx="559" cy="112" rx="4" ry="3" /><ellipse cx="487" cy="141" rx="2" ry="3" /><path d="m504 68 8-1 3 3-8 3z" /></g>
          <path d="m350 201 16-1 12 1-12 1z" fill="#cfe0b8" />
          <g opacity=".7"><Shape d="M1300 345 1320 350 1310 385 1280 415 1285 380Z" fill="#a3907c" /></g>
          <path d="m203 325 8-4 12 0M150 331l-8 20 4 5M246 320l12 14M252 340l8 6M345 424l8 6M415 368l6 6M165 377l4 8" stroke="#6687e0" strokeWidth="1.500" fill="none" strokeDasharray="2 1" />
        </g>
      </g>
    </g>
  </svg>
);

const MouseIcon = () => <svg width="17" height="16" viewBox="0 0 17 16"><path d="m1 3 5 9c2 4 6 4 8 2s1-4-1-6L6 1C3 0 0 1 1 3z" fill="#bbb" stroke="#333" /><path d="m1 5 5-4M2 8l7-6M4 11l8-6M9 7l-4-5M11 5l4-4" stroke="#222" strokeWidth="1.400" /><circle cx="10.500" cy="11.500" r="2.500" fill="#eee" stroke="#333" /></svg>;
const LockIcon = () => <svg width="12" height="16" viewBox="0 0 12 16"><path d="M2.500 8V4.500a3.500 3.500 0 0 1 7 0V8" fill="none" stroke="#999" strokeWidth="1.800" /><rect y="7" width="12" height="8.500" rx="1" fill="#606060" /></svg>;
const GlobeIcon = () => <svg width="15" height="15" viewBox="0 0 15 15"><ellipse cx="7.500" cy="6.500" rx="6.500" ry="5.500" fill="#b5b5b5" stroke="#777" strokeWidth=".8" /><path d="M0 6.500h15M2 3.500h11M2 9.500h11M7.500 0v15M4.500 1.500c-2 3-2 7 0 10M10.500 1.500c2 3 2 7 0 10M3 12.500h9" stroke="#6a6a6a" fill="none" strokeWidth=".9" /></svg>;
const BubbleIcon = () => <svg width="17" height="16" viewBox="0 0 17 16"><path d="M9 0c5 0 9 3 9 6.500S15 13 13 13l1 3c-2 0-3.500-1-4-3H9C4 13 0 10 0 6.500S4 0 9 0z" fill="#5b5b5b" /></svg>;
const SearchIcon = () => <svg width="12" height="13" viewBox="0 0 12 13"><circle cx="4.500" cy="5" r="4" fill="none" stroke="#888" strokeWidth="1.300" /><path d="m7.500 8 4 4" stroke="#888" strokeWidth="1.700" /></svg>;

export default function App() {
  return (
    <>
      <Global />
      <Window>
        <Side>
          <Panel $h={118}>
            <TitleBar $h={15} $pull={7}><span>Browser</span><TitleIcons /></TitleBar>
            <Tools><AddLayerIcon /><RefreshIcon /><FilterIcon /><TreeArrowIcon up /><InfoIcon /></Tools>
            <Tree $h={70}>
              <Rows>
                <Row $indent={7} $w={436} $shade><StarIcon /><Gap $w={6} /><Name>Favorites</Name></Row>
                <Row $indent={8} $w={436} $shade><Tri /><Gap $w={7} /><FolderIcon open /><Gap $w={6} /><Name>C:\Lakshmanan\arset_classification</Name></Row>
                <Row $indent={24}><Tri d="right" /><Gap $w={7} /><FolderIcon /><Gap $w={6} /><Name>data</Name></Row>
                <Row $indent={24}><Tri /><Gap $w={7} /><DbIcon /><Gap $w={6} /><Name>data-download-guide.pdf</Name></Row>
              </Rows>
              <Scroll>
                <ScrollPart $h={14}><Tri d="up" /></ScrollPart>
                <ScrollPart $h={27} />
                <ScrollPart $h={14}><Tri /></ScrollPart>
              </Scroll>
            </Tree>
          </Panel>
          <Grip $h={8} />
          <Panel $h={209}>
            <TitleBar $h={15} $pull={6}><span>Layers</span><TitleIcons /></TitleBar>
            <Tools>
              <BrushIcon /><GroupIcon /><EyeIcon /><FilterMenuIcon /><ExprIcon />
              <MenuArrow><Tri /></MenuArrow><TreeArrowIcon /><TreeArrowIcon up /><RemoveLayerIcon />
            </Tools>
            <Tree $h={161}>
              <Rows>
                <Row $indent={11} $shade><Check><Tick /></Check><Gap $w={6} /><PatternSwatch /><Gap $w={6} /><Name $kind="active">SCP training layer</Name><MemTag><ChipIcon /></MemTag></Row>
                <Row $indent={11}><Check><Tick /></Check><Gap $w={6} /><PatternSwatch /><Gap $w={6} /><Name $kind="bold">SCP training layer</Name><MemTag><ChipIcon /></MemTag></Row>
                <Row $indent={11}><Check><Tick /></Check><Gap $w={8} /><RasterIcon /><Gap $w={7} /><Name $kind="bold">clipped_data</Name></Row>
                <Row $indent={31}><Swatch $c="#f00" /><Gap $w={6} /><Name>Band 5</Name></Row>
                <Row $indent={31}><Swatch $c="#0f0" /><Gap $w={6} /><Name>Band 4</Name></Row>
                <Row $indent={31}><Swatch $c="#00f" /><Gap $w={6} /><Name>Band 3</Name></Row>
                <Row $indent={11}><Check /><Gap $w={6} /><Swatch $c="#a57258" $edge="#3c2c26" /><Gap $w={6} /><Name $kind="off">calaveras</Name></Row>
              </Rows>
            </Tree>
          </Panel>
          <Grip $h={8} />
          <TitleBar $h={15} $pull={7}><span>SCP Dock</span><TitleIcons /></TitleBar>
          <VGap $h={11} />
          <Dock>
            <Tabs>
              <Tab $h={61}><span>Home</span><HomeTabIcon /></Tab>
              <Tab $h={96} $on><span>Training input</span><RoiTabIcon /></Tab>
              <Tab $h={91}><span>ROI options</span><RoiTabIcon tools /></Tab>
              <IconTab><BandsIcon /></IconTab>
              <IconTab><DownIcon /></IconTab>
              <IconTab><PreIcon /></IconTab>
              <IconTab><BandProcIcon /></IconTab>
              <IconTab><PostIcon /></IconTab>
              <IconTab $h={24}><CalcIcon /></IconTab>
              <TabArrow><Tri d="up" c="#999" /></TabArrow>
              <TabArrow><Tri /></TabArrow>
            </Tabs>
            <Body>
              <FileRow $h={27}>
                <Btn><OpenProjectIcon /></Btn><Btn><NewProjectIcon /></Btn>
                <Field $read>C:/Lakshmanan/arset_classification/new-input.scpx</Field>
                <Btn><ResetIcon /></Btn>
              </FileRow>
              <Banner>ROI &amp; Signature list (band set 1)</Banner>
              <FileRow $h={22}><Field $hint>Filter</Field></FileRow>
              <ListRow>
                <BtnColumn>
                  <Btn><AddSignatureIcon /></Btn><Btn><ImportIcon /></Btn><Btn><MinusIcon /></Btn>
                  <VGap $h={11} />
                  <Btn><PlotIcon /></Btn><Btn><ScatterIcon /></Btn>
                  <VGap $h={11} />
                  <Btn><LoadIcon /></Btn><Btn><LoadIcon up /></Btn>
                </BtnColumn>
                <Table>
                  <Head>
                    <HeadCell>MC ID<Tri d="up" /></HeadCell><HeadCell>C ID</HeadCell><HeadCell>Name</HeadCell><HeadCell>Type</HeadCell><HeadCell>Color</HeadCell>
                  </Head>
                </Table>
              </ListRow>
              <FormRow $mt={6}>
                <FormLabel $w={34}>MC ID</FormLabel><Spin $w={49} $right><span>1</span><SpinArrows /></Spin>
                <Gap $w={6} /><FormLabel $w={49}>MC Name</FormLabel><Field>Water</Field>
              </FormRow>
              <FormRow $mt={4}>
                <FormLabel $w={34}>C ID</FormLabel><Spin $w={49} $right><span>1</span><SpinArrows /></Spin>
                <Gap $w={6} /><FormLabel $w={49}>C Name</FormLabel><Field>Lakee</Field>
              </FormRow>
              <Actions>
                <Btn $faded><UndoIcon /></Btn><Btn $faded><UndoIcon flip /></Btn>
                <Push />
                <Check><Tick /></Check><FormLabel $w={46}>Autosave</FormLabel>
                <Check><Tick /></Check><FormLabel $w={47}>Signature</FormLabel>
                <Btn $faded><SaveIcon /></Btn>
              </Actions>
            </Body>
          </Dock>
          <LocatorBox><SearchIcon />Type to locate (Ctrl+K)</LocatorBox>
          <SideGrip />
        </Side>
        <Main>
          <MapCanvas><Satellite /></MapCanvas>
          <Status>
            <StatusText $w={57}>Coordinate</StatusText>
            <Field $w={101} $pad={6}>738050, 4207257</Field>
            <Gap $w={4} /><MouseIcon /><Gap $w={12} />
            <StatusText $w={29}>Scale</StatusText>
            <Combo>1:453004<ComboArrow><Tri /></ComboArrow></Combo>
            <Gap $w={12} /><LockIcon /><Gap $w={8} />
            <StatusText $w={49}>Magnifier</StatusText>
            <Spin $w={81}><span>100%</span><SpinArrows /></Spin>
            <Gap $w={10} /><StatusText $w={49}>Rotation</StatusText>
            <Spin $w={81}><span>0.0 °</span><SpinArrows /></Spin>
            <Gap $w={6} /><Check><Tick /></Check><Gap $w={5} />
            <StatusText $w={50}>Render</StatusText><GlobeIcon /><Gap $w={3} />
            <StatusText $w={83}>EPSG:32610</StatusText><BubbleIcon />
          </Status>
        </Main>
      </Window>
    </>
  );
}
